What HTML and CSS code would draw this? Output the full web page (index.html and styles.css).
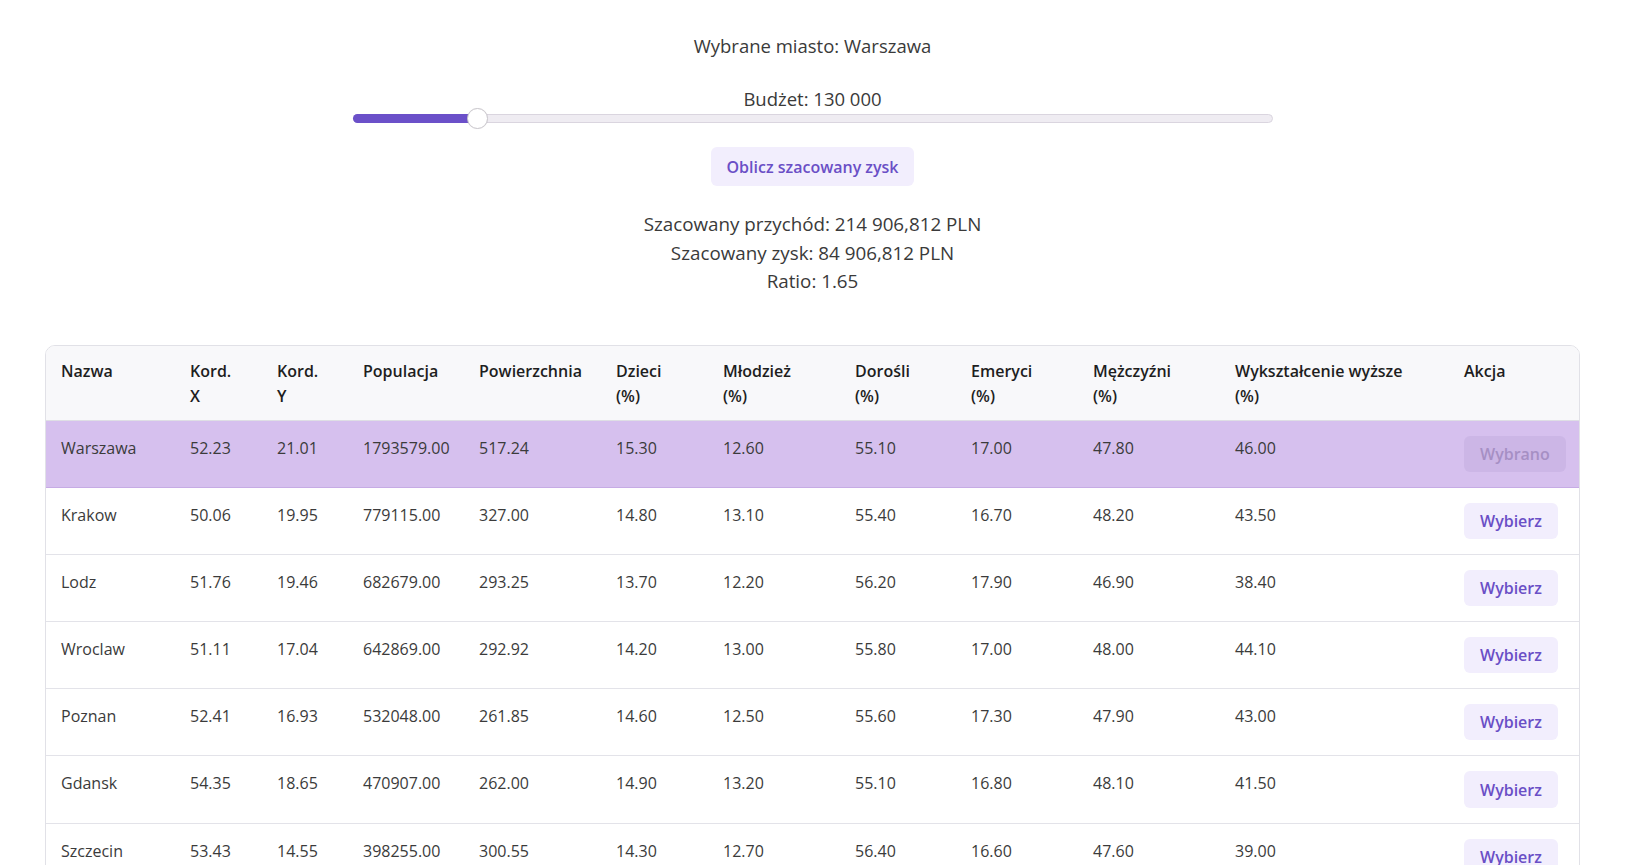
FILE: index.html
```html
<!DOCTYPE html>
<html lang="pl">
<head>
<meta charset="utf-8">
<title>Kalkulator zysku</title>
<link rel="stylesheet" href="styles.css">
</head>
<body>
<main class="page">
  <section class="controls">
    <p class="selected-city">Wybrane miasto: Warszawa</p>
    <p class="budget-label">Budżet: 130 000</p>
    <div class="slider">
      <div class="slider-track">
        <div class="slider-fill" style="width: 13.5%"></div>
        <div class="slider-thumb" style="left: 13.5%"></div>
      </div>
    </div>
    <button class="calc-btn" type="button">Oblicz szacowany zysk</button>
    <div class="results">
      <p>Szacowany przychód: 214 906,812 PLN</p>
      <p>Szacowany zysk: 84 906,812 PLN</p>
      <p>Ratio: 1.65</p>
    </div>
  </section>

  <div class="table-wrap">
    <table class="cities">
      <colgroup>
        <col class="c-name"><col class="c-x"><col class="c-y"><col class="c-pop"><col class="c-area"><col class="c-kids"><col class="c-youth"><col class="c-adults"><col class="c-senior"><col class="c-men"><col class="c-edu"><col class="c-action">
      </colgroup>
      <thead>
        <tr>
          <th>Nazwa</th>
          <th>Kord. <span class="wrap">X</span></th>
          <th>Kord. <span class="wrap">Y</span></th>
          <th>Populacja</th>
          <th>Powierzchnia</th>
          <th>Dzieci <span class="wrap">(%)</span></th>
          <th>Młodzież <span class="wrap">(%)</span></th>
          <th>Dorośli <span class="wrap">(%)</span></th>
          <th>Emeryci <span class="wrap">(%)</span></th>
          <th>Mężczyźni <span class="wrap">(%)</span></th>
          <th>Wykształcenie wyższe <span class="wrap">(%)</span></th>
          <th>Akcja</th>
        </tr>
      </thead>
      <tbody>
        <tr class="is-selected">
          <td>Warszawa</td><td>52.23</td><td>21.01</td><td>1793579.00</td><td>517.24</td><td>15.30</td><td>12.60</td><td>55.10</td><td>17.00</td><td>47.80</td><td>46.00</td>
          <td><button class="pick-btn" type="button" disabled>Wybrano</button></td>
        </tr>
        <tr>
          <td>Krakow</td><td>50.06</td><td>19.95</td><td>779115.00</td><td>327.00</td><td>14.80</td><td>13.10</td><td>55.40</td><td>16.70</td><td>48.20</td><td>43.50</td>
          <td><button class="pick-btn" type="button">Wybierz</button></td>
        </tr>
        <tr>
          <td>Lodz</td><td>51.76</td><td>19.46</td><td>682679.00</td><td>293.25</td><td>13.70</td><td>12.20</td><td>56.20</td><td>17.90</td><td>46.90</td><td>38.40</td>
          <td><button class="pick-btn" type="button">Wybierz</button></td>
        </tr>
        <tr>
          <td>Wroclaw</td><td>51.11</td><td>17.04</td><td>642869.00</td><td>292.92</td><td>14.20</td><td>13.00</td><td>55.80</td><td>17.00</td><td>48.00</td><td>44.10</td>
          <td><button class="pick-btn" type="button">Wybierz</button></td>
        </tr>
        <tr>
          <td>Poznan</td><td>52.41</td><td>16.93</td><td>532048.00</td><td>261.85</td><td>14.60</td><td>12.50</td><td>55.60</td><td>17.30</td><td>47.90</td><td>43.00</td>
          <td><button class="pick-btn" type="button">Wybierz</button></td>
        </tr>
        <tr>
          <td>Gdansk</td><td>54.35</td><td>18.65</td><td>470907.00</td><td>262.00</td><td>14.90</td><td>13.20</td><td>55.10</td><td>16.80</td><td>48.10</td><td>41.50</td>
          <td><button class="pick-btn" type="button">Wybierz</button></td>
        </tr>
        <tr>
          <td>Szczecin</td><td>53.43</td><td>14.55</td><td>398255.00</td><td>300.55</td><td>14.30</td><td>12.70</td><td>56.40</td><td>16.60</td><td>47.60</td><td>39.00</td>
          <td><button class="pick-btn" type="button">Wybierz</button></td>
        </tr>
      </tbody>
    </table>
  </div>
</main>
</body>
</html>
```

FILE: styles.css
```css
* { box-sizing: border-box; }

html, body {
  margin: 0;
  padding: 0;
  background: #ffffff;
}

body {
  font-family: "Open Sans", "Noto Sans", "Liberation Sans", sans-serif;
  color: #3a3a3a;
}

.page {
  padding: 32px 47px 40px 45px;
}

.controls {
  display: flex;
  flex-direction: column;
  align-items: center;
  text-align: center;
}

.controls p {
  margin: 0;
}

.selected-city {
  font-size: 18.5px;
  line-height: 27px;
}

.budget-label {
  margin-top: 28px !important;
  font-size: 18.5px;
  line-height: 24px;
}

.slider {
  width: 920px;
  height: 15px;
  display: flex;
  align-items: center;
}

.slider-track {
  position: relative;
  width: 100%;
  height: 9px;
  border-radius: 5px;
  background: #efecf2;
  border: 1px solid #dad5df;
}

.slider-fill {
  position: absolute;
  left: -1px;
  top: -1px;
  bottom: -1px;
  border-radius: 5px 0 0 5px;
  background: #6b50c9;
}

.slider-thumb {
  position: absolute;
  top: 50%;
  width: 21px;
  height: 21px;
  margin-left: -10px;
  margin-top: -10.5px;
  border-radius: 50%;
  background: #ffffff;
  border: 1px solid #c9c6cc;
  box-shadow: 0 0 1px rgba(0,0,0,0.08);
}

.calc-btn {
  margin-top: 21px;
  height: 39px;
  padding: 0 15px;
  border: none;
  border-radius: 6px;
  background: #f2eefd;
  color: #6a4fc6;
  font-family: inherit;
  font-size: 16px;
  font-weight: 600;
}

.results {
  margin-top: 24px;
  font-size: 18.8px;
  line-height: 28.5px;
}

.table-wrap {
  margin-top: 49px;
  border: 1px solid #e1e1e7;
  border-radius: 10px;
  overflow: hidden;
}

.cities {
  width: 100%;
  table-layout: fixed;
  border-collapse: collapse;
  font-size: 16px;
  line-height: 25px;
}

.c-name { width: 129px; }
.c-x { width: 87px; }
.c-y { width: 86px; }
.c-pop { width: 116px; }
.c-area { width: 137px; }
.c-kids { width: 107px; }
.c-youth { width: 132px; }
.c-adults { width: 116px; }
.c-senior { width: 122px; }
.c-men { width: 142px; }
.c-edu { width: 229px; }

.cities th {
  text-align: left;
  vertical-align: top;
  padding: 13px 15px 11px;
  background: #f8f8fa;
  color: #1e1e1e;
  font-weight: 600;
  border-bottom: 1px solid #dedee4;
  white-space: nowrap;
}

.cities th .wrap {
  display: block;
}

.cities td {
  text-align: left;
  vertical-align: top;
  padding: 15px 15px 15px;
  border-bottom: 1px solid #e3e3e9;
  color: #3b3b3b;
  white-space: nowrap;
}

.cities tr.is-selected td {
  background: #d6c0ee;
  border-bottom-color: #c6abe5;
}

.pick-btn {
  display: inline-block;
  height: 36.2px;
  padding: 0 16px;
  border: none;
  border-radius: 6px;
  background: #f2eefd;
  color: #6a4fc6;
  font-family: inherit;
  font-size: 16px;
  font-weight: 600;
  line-height: 36px;
}

.pick-btn:disabled {
  background: #ccb6e6;
  color: #a68fc4;
}
```
